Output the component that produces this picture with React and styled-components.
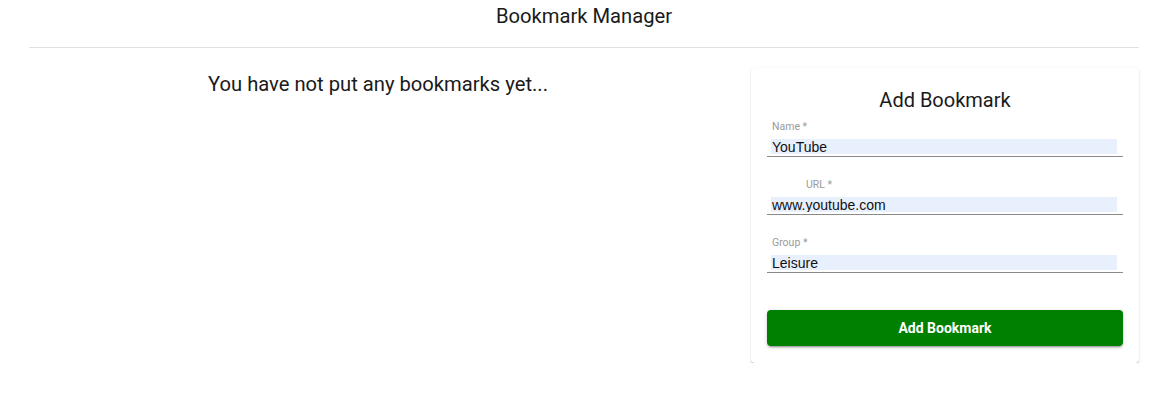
import React from "react";
import styled, { createGlobalStyle } from "styled-components";

const GlobalStyle = createGlobalStyle`
  body {
    margin: 0;
    background: #fff;
    font-family: Roboto, "Liberation Sans", sans-serif;
    color: #212121;
  }
`;

const Page = styled.div`
  width: 1168px;
  padding: 0 29px;
  box-sizing: border-box;
`;

const Header = styled.header`
  padding: 4px 0 19px;
  border-bottom: 1px solid #e0e0e0;
  text-align: center;
`;

const Title = styled.h1`
  margin: 0;
  font-size: 20.2px;
  line-height: 24px;
  font-weight: 400;
  color: #1a1a1a;
`;

const Content = styled.div`
  display: flex;
  gap: 24px;
  padding-top: 20px;
`;

const Main = styled.div`
  flex: 1;
  text-align: center;
`;

const Empty = styled.h2`
  margin: 4px 0 0;
  font-size: 20.2px;
  line-height: 24px;
  font-weight: 400;
  color: #1a1a1a;
`;

const Card = styled.form`
  width: 388px;
  box-sizing: border-box;
  padding: 20px 16px 17px;
  border-radius: 4px;
  background: #fff;
  box-shadow: 0 2px 1px -1px rgba(0, 0, 0, 0.2), 0 1px 1px 0 rgba(0, 0, 0, 0.14),
    0 1px 3px 0 rgba(0, 0, 0, 0.12);
`;

const CardTitle = styled.h3`
  margin: 0 0 8px;
  text-align: center;
  font-size: 20px;
  line-height: 24px;
  font-weight: 400;
  color: #1a1a1a;
`;

const Field = styled.div`
  margin-bottom: 21px;
`;

const Label = styled.label`
  display: block;
  margin: 0 0 6px ${(p) => p.$indent || 5}px;
  font-size: 10.5px;
  line-height: 13px;
  color: #9a9a9a;
`;

const InputLine = styled.div`
  height: 18px;
  box-sizing: border-box;
  border-bottom: 1px solid #8a8a8a;
  padding: 0 6px 2px 4px;
`;

const Input = styled.input`
  display: block;
  width: 100%;
  height: 15px;
  box-sizing: border-box;
  border: none;
  outline: none;
  padding: 0 0 0 1px;
  background: #e8f0fe;
  font-family: "Liberation Sans", Arial, sans-serif;
  font-size: 14px;
  color: #111;
`;

const Button = styled.button`
  display: block;
  width: 100%;
  height: 36px;
  margin-top: 37px;
  border: none;
  border-radius: 4px;
  background: #008000;
  color: #fff;
  font-family: Roboto, sans-serif;
  font-size: 14px;
  font-weight: 700;
  box-shadow: 0 3px 1px -2px rgba(0, 0, 0, 0.2), 0 2px 2px 0 rgba(0, 0, 0, 0.14),
    0 1px 5px 0 rgba(0, 0, 0, 0.12);
`;

const fields = [
  { label: "Name *", value: "YouTube" },
  { label: "URL *", value: "www.youtube.com", indent: 39 },
  { label: "Group *", value: "Leisure" },
];

export default function App() {
  return (
    <>
      <GlobalStyle />
      <Page>
        <Header>
          <Title>Bookmark Manager</Title>
        </Header>
        <Content>
          <Main>
            <Empty>You have not put any bookmarks yet...</Empty>
          </Main>
          <Card onSubmit={(e) => e.preventDefault()}>
            <CardTitle>Add Bookmark</CardTitle>
            {fields.map((f) => (
              <Field key={f.label}>
                <Label $indent={f.indent}>{f.label}</Label>
                <InputLine>
                  <Input defaultValue={f.value} />
                </InputLine>
              </Field>
            ))}
            <Button type="submit">Add Bookmark</Button>
          </Card>
        </Content>
      </Page>
    </>
  );
}
